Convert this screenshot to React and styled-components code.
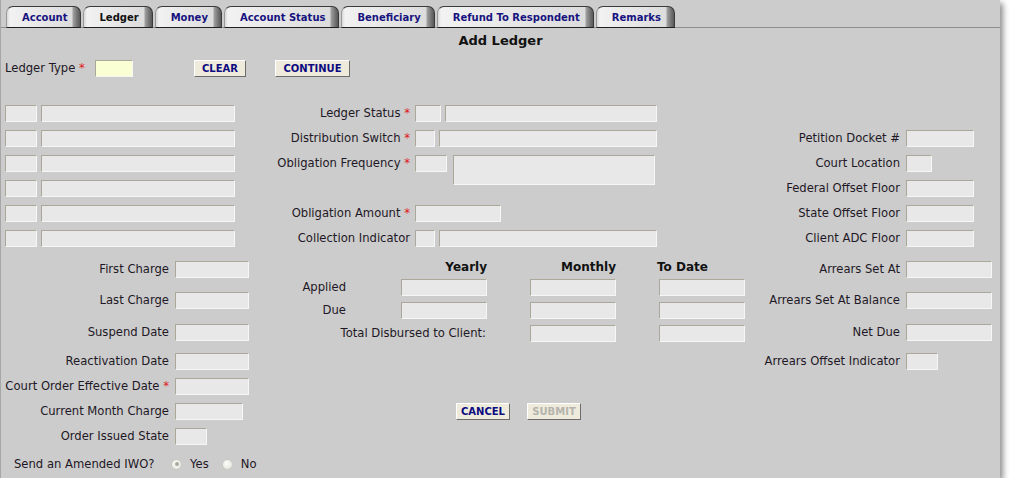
import React from 'react';
import styled, { createGlobalStyle, css } from 'styled-components';

const Global = createGlobalStyle`
  html, body { margin: 0; padding: 0; background: #ffffff; }
  body { font-family: "DejaVu Sans", Verdana, sans-serif; }
`;

const FONT = `"DejaVu Sans", Verdana, sans-serif`;

const Panel = styled.div`
  width: 1000px;
  height: 478px;
  box-sizing: border-box;
  background: #cccccc;
  border-left: 1px solid #a6a6a6;
  box-shadow: 3px 3px 6px rgba(0, 0, 0, 0.45);
  font-family: ${FONT};
  font-size: 11.6px;
  color: #1e1826;
`;

const TabBar = styled.div`
  display: flex;
  align-items: flex-end;
  gap: 2px;
  height: 28px;
  box-sizing: border-box;
  padding: 6px 0 0 5px;
  border-bottom: 1px solid #8e8e8e;
`;

const Tab = styled.div`
  height: 22px;
  margin-bottom: -1px;
  box-sizing: border-box;
  padding: 0 13px 0 15px;
  border: 1px solid #3a3a3a;
  border-left-color: #9a9a9a;
  border-bottom-color: #202020;
  border-radius: 7px 7px 0 0;
  background: linear-gradient(
    to right,
    #d8d8d8 0,
    #f2f2f2 3px,
    #e6e6e6 50%,
    #dcdcdc calc(100% - 8px),
    #a0a0a0 calc(100% - 7px),
    #6a6a6a calc(100% - 2px),
    #5a5a5a 100%
  );
  font-weight: bold;
  font-size: 10px;
  line-height: 21px;
  color: ${(p) => (p.$active ? '#111111' : '#17137e')};
  white-space: nowrap;
`;

const Title = styled.h1`
  margin: 4px 0 0;
  text-align: center;
  font-size: 13px;
  line-height: 17px;
  font-weight: bold;
  color: #111111;
`;

const LedgerRow = styled.div`
  display: flex;
  align-items: center;
  height: 17px;
  margin-top: 11px;
  padding-left: 4px;
`;

const Label = styled.span`
  line-height: 17px;
  white-space: nowrap;
  text-align: ${(p) => p.$align || 'right'};
  ${(p) => p.$w && css`width: ${p.$w}px;`}
`;

const Req = styled.span`
  color: #e01818;
  &::before { content: ' '; }
`;

const Field = styled.input`
  display: block;
  width: ${(p) => p.$w}px;
  height: ${(p) => p.$h || 17}px;
  box-sizing: border-box;
  margin: 0;
  padding: 0 2px;
  border: 1px solid;
  border-color: #aca899 #f6f6f6 #f6f6f6 #aca899;
  background: ${(p) => (p.$yellow ? '#faffd4' : '#e8e8e8')};
  font-family: ${FONT};
  font-size: 11px;
  outline: none;
`;

const Area = styled.textarea`
  display: block;
  width: ${(p) => p.$w}px;
  height: ${(p) => p.$h}px;
  box-sizing: border-box;
  margin: 0;
  padding: 0;
  resize: none;
  border: 1px solid;
  border-color: #aca899 #f6f6f6 #f6f6f6 #aca899;
  background: #e8e8e8;
  outline: none;
`;

const Button = styled.button`
  width: ${(p) => p.$w}px;
  height: 17px;
  box-sizing: border-box;
  margin: 0;
  margin-left: ${(p) => p.$ml || 0}px;
  padding: 0;
  border: 1px solid;
  border-color: #ffffff #6c6c6c #6c6c6c #ffffff;
  background: #eeeadc;
  font-family: ${FONT};
  font-weight: bold;
  font-size: 10px;
  line-height: 15px;
  color: #0c0a80;
  &:disabled { color: #b4b4ac; }
`;

const Group = styled.div`
  display: flex;
  gap: ${(p) => p.$gap || 4}px;
  align-items: flex-start;
`;

const UpperGrid = styled.div`
  display: grid;
  margin-top: 28px;
  padding-left: 4px;
  grid-template-columns: 230px 180px 242px 249px 68px;
  grid-auto-rows: 17px;
  row-gap: 8px;
`;

const Cell = styled.div`
  grid-column: ${(p) => p.$col};
  grid-row: ${(p) => p.$row};
  ${(p) => p.$label && css`
    text-align: right;
    padding-right: ${p.$pr ?? 5}px;
    line-height: 17px;
    white-space: nowrap;
  `}
`;

const LowerGrid = styled.div`
  display: grid;
  margin-top: 14px;
  grid-template-columns: 168px 74px 490px 149px 86px;
  grid-template-rows: 31px 32px 29px 25px 25px 25px 25px 22px;
  column-gap: 6px;
  align-items: start;
`;

const MoneyTable = styled.div`
  grid-column: 3;
  grid-row: 1 / 5;
  display: grid;
  grid-template-columns: 103px 86px 86px 86px;
  grid-template-rows: 12px 17px 17px 17px;
  column-gap: 43px;
  row-gap: 6px;
`;

const Head = styled.div`
  font-weight: bold;
  font-size: 12px;
  line-height: 12px;
  color: #111111;
  text-align: ${(p) => p.$align || 'right'};
  ${(p) => p.$ml && css`margin-left: ${p.$ml}px;`}
`;

const RowLabel = styled.div`
  grid-column: ${(p) => p.$span || 'auto'};
  text-align: right;
  padding-right: ${(p) => p.$pr ?? 12}px;
  line-height: 17px;
  white-space: nowrap;
`;

const Actions = styled.div`
  grid-column: 3;
  grid-row: 6;
  display: flex;
  gap: 17px;
  padding-left: 201px;
`;

const RadioRow = styled.div`
  grid-column: 1 / 4;
  grid-row: 8;
  display: flex;
  align-items: center;
  height: 22px;
  padding-left: 13px;
`;

const RadioOpt = styled.label`
  display: flex;
  align-items: center;
  gap: 8px;
  margin-right: 13px;
`;

const RadioDot = styled.span`
  position: relative;
  width: 11px;
  height: 11px;
  box-sizing: border-box;
  border-radius: 50%;
  border: 1px solid #c9c9c0;
  background: radial-gradient(circle at 40% 40%, #fbfbf8 0, #ecece6 60%, #dcdcd4 100%);
  ${(p) => p.$checked && css`
    &::after {
      content: '';
      position: absolute;
      left: 2.5px;
      top: 2.5px;
      width: 4px;
      height: 4px;
      border-radius: 50%;
      background: #a8a8a0;
    }
  `}
`;

const tabs = ['Account', 'Ledger', 'Money', 'Account Status', 'Beneficiary', 'Refund To Respondent', 'Remarks'];

const leftLower = [
  { label: 'First Charge', w: 74 },
  { label: 'Last Charge', w: 74 },
  { label: 'Suspend Date', w: 74 },
  { label: 'Reactivation Date', w: 74 },
  { label: 'Court Order Effective Date', w: 74, req: true },
  { label: 'Current Month Charge', w: 68 },
  { label: 'Order Issued State', w: 32 },
];

const rightLower = [
  { label: 'Arrears Set At', w: 86 },
  { label: 'Arrears Set At Balance', w: 86 },
  { label: 'Net Due', w: 86 },
  { label: 'Arrears Offset Indicator', w: 32 },
];

const rightUpper = [
  { label: 'Petition Docket #', w: 68, row: 2 },
  { label: 'Court Location', w: 26, row: 3 },
  { label: 'Federal Offset Floor', w: 68, row: 4 },
  { label: 'State Offset Floor', w: 68, row: 5 },
  { label: 'Client ADC Floor', w: 68, row: 6 },
];

export default function App() {
  return (
    <>
      <Global />
      <Panel>
        <TabBar>
          {tabs.map((t) => (
            <Tab key={t} $active={t === 'Ledger'}>{t}</Tab>
          ))}
        </TabBar>
        <Title>Add Ledger</Title>
        <LedgerRow>
          <Label $align="left" $w={90}>Ledger Type<Req>*</Req></Label>
          <Field $w={38} $yellow readOnly />
          <Button $w={52} $ml={61}>CLEAR</Button>
          <Button $w={75} $ml={29}>CONTINUE</Button>
        </LedgerRow>

        <UpperGrid>
          {[1, 2, 3, 4, 5, 6].map((r) => (
            <Cell key={r} $col={1} $row={r}>
              <Group>
                <Field $w={32} readOnly />
                <Field $w={194} readOnly />
              </Group>
            </Cell>
          ))}

          <Cell $col={2} $row={1} $label>Ledger Status<Req>*</Req></Cell>
          <Cell $col={3} $row={1}>
            <Group><Field $w={26} readOnly /><Field $w={212} readOnly /></Group>
          </Cell>

          <Cell $col={2} $row={2} $label>Distribution Switch<Req>*</Req></Cell>
          <Cell $col={3} $row={2}>
            <Group><Field $w={20} readOnly /><Field $w={218} readOnly /></Group>
          </Cell>

          <Cell $col={2} $row={3} $label>Obligation Frequency<Req>*</Req></Cell>
          <Cell $col={3} $row="3 / 5">
            <Group $gap={6}><Field $w={32} readOnly /><Area $w={202} $h={30} readOnly /></Group>
          </Cell>

          <Cell $col={2} $row={5} $label>Obligation Amount<Req>*</Req></Cell>
          <Cell $col={3} $row={5}><Field $w={86} readOnly /></Cell>

          <Cell $col={2} $row={6} $label>Collection Indicator</Cell>
          <Cell $col={3} $row={6}>
            <Group><Field $w={20} readOnly /><Field $w={218} readOnly /></Group>
          </Cell>

          {rightUpper.map((f) => (
            <React.Fragment key={f.label}>
              <Cell $col={4} $row={f.row} $label $pr={6}>{f.label}</Cell>
              <Cell $col={5} $row={f.row}><Field $w={f.w} readOnly /></Cell>
            </React.Fragment>
          ))}
        </UpperGrid>

        <LowerGrid>
          {leftLower.map((f, i) => (
            <React.Fragment key={f.label}>
              <Cell $col={1} $row={i + 1} $label $pr={0}>
                {f.label}{f.req && <Req>*</Req>}
              </Cell>
              <Cell $col={2} $row={i + 1}><Field $w={f.w} readOnly /></Cell>
            </React.Fragment>
          ))}

          <MoneyTable>
            <div />
            <Head>Yearly</Head>
            <Head>Monthly</Head>
            <Head $align="left" $ml={-2}>To Date</Head>

            <RowLabel>Applied</RowLabel>
            <Field $w={86} readOnly />
            <Field $w={86} readOnly />
            <Field $w={86} readOnly />

            <RowLabel>Due</RowLabel>
            <Field $w={86} readOnly />
            <Field $w={86} readOnly />
            <Field $w={86} readOnly />

            <RowLabel $span="1 / 3" $pr={1}>Total Disbursed to Client:</RowLabel>
            <Field $w={86} readOnly />
            <Field $w={86} readOnly />
          </MoneyTable>

          {rightLower.map((f, i) => (
            <React.Fragment key={f.label}>
              <Cell $col={4} $row={i + 1} $label $pr={0}>{f.label}</Cell>
              <Cell $col={5} $row={i + 1}><Field $w={f.w} readOnly /></Cell>
            </React.Fragment>
          ))}

          <Actions>
            <Button $w={54}>CANCEL</Button>
            <Button $w={54} disabled>SUBMIT</Button>
          </Actions>

          <RadioRow>
            <Label $align="left" $w={157}>Send an Amended IWO?</Label>
            <RadioOpt><RadioDot $checked />Yes</RadioOpt>
            <RadioOpt><RadioDot />No</RadioOpt>
          </RadioRow>
        </LowerGrid>
      </Panel>
    </>
  );
}
